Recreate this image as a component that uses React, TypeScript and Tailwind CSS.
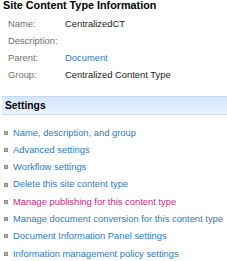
import React from 'react';

const INFO = [
  { label: 'Name:', value: 'CentralizedCT', link: false },
  { label: 'Description:', value: '', link: false },
  { label: 'Parent:', value: 'Document', link: true },
  { label: 'Group:', value: 'Centralized Content Type', link: false },
];

const LINKS = [
  { text: 'Name, description, and group', visited: false },
  { text: 'Advanced settings', visited: false },
  { text: 'Workflow settings', visited: false },
  { text: 'Delete this site content type', visited: false },
  { text: 'Manage publishing for this content type', visited: true },
  { text: 'Manage document conversion for this content type', visited: false },
  { text: 'Document Information Panel settings', visited: false },
  { text: 'Information management policy settings', visited: false },
];

const App: React.FC = () => {
  return (
    <div className="w-[227px] h-[261px] overflow-hidden bg-white text-[9.4px] text-[#222]" style={{ fontFamily: '"Liberation Sans", Arial, sans-serif' }}>
      <div className="pl-[3px] h-[11px] leading-[11px] text-[10.8px] font-bold text-black">Site Content Type Information</div>
      <div className="mt-[5px] pl-[8px] flex flex-col">
        {INFO.map(row => (
          <div key={row.label} className="h-[17px] flex items-center">
            <span className="w-[57px] text-[#707070]">{row.label}</span>
            <span className={row.link ? 'text-[#2b7bc4]' : 'text-[#1a1a1a]'}>{row.value}</span>
          </div>
        ))}
      </div>
      <div className="mt-[12px] ml-[2px] h-[19px] flex items-center pl-[3px] border-y border-[#c5d9f1] bg-gradient-to-b from-[#d5e6ff] to-[#eaf3ff]">
        <span className="text-[10.3px] font-bold text-black">Settings</span>
      </div>
      <div className="mt-[9px] flex flex-col">
        {LINKS.map(l => (
          <div key={l.text} className="h-[17.3px] flex items-center whitespace-nowrap">
            <span className="ml-[4px] mr-[5px] w-[4px] h-[4px] bg-[#b0b0b0] border border-[#909090] shrink-0" />
            <span className={l.visited ? 'text-[#c42a86]' : 'text-[#2b7bc4]'}>{l.text}</span>
          </div>
        ))}
      </div>
    </div>
  );
};

export default App;
